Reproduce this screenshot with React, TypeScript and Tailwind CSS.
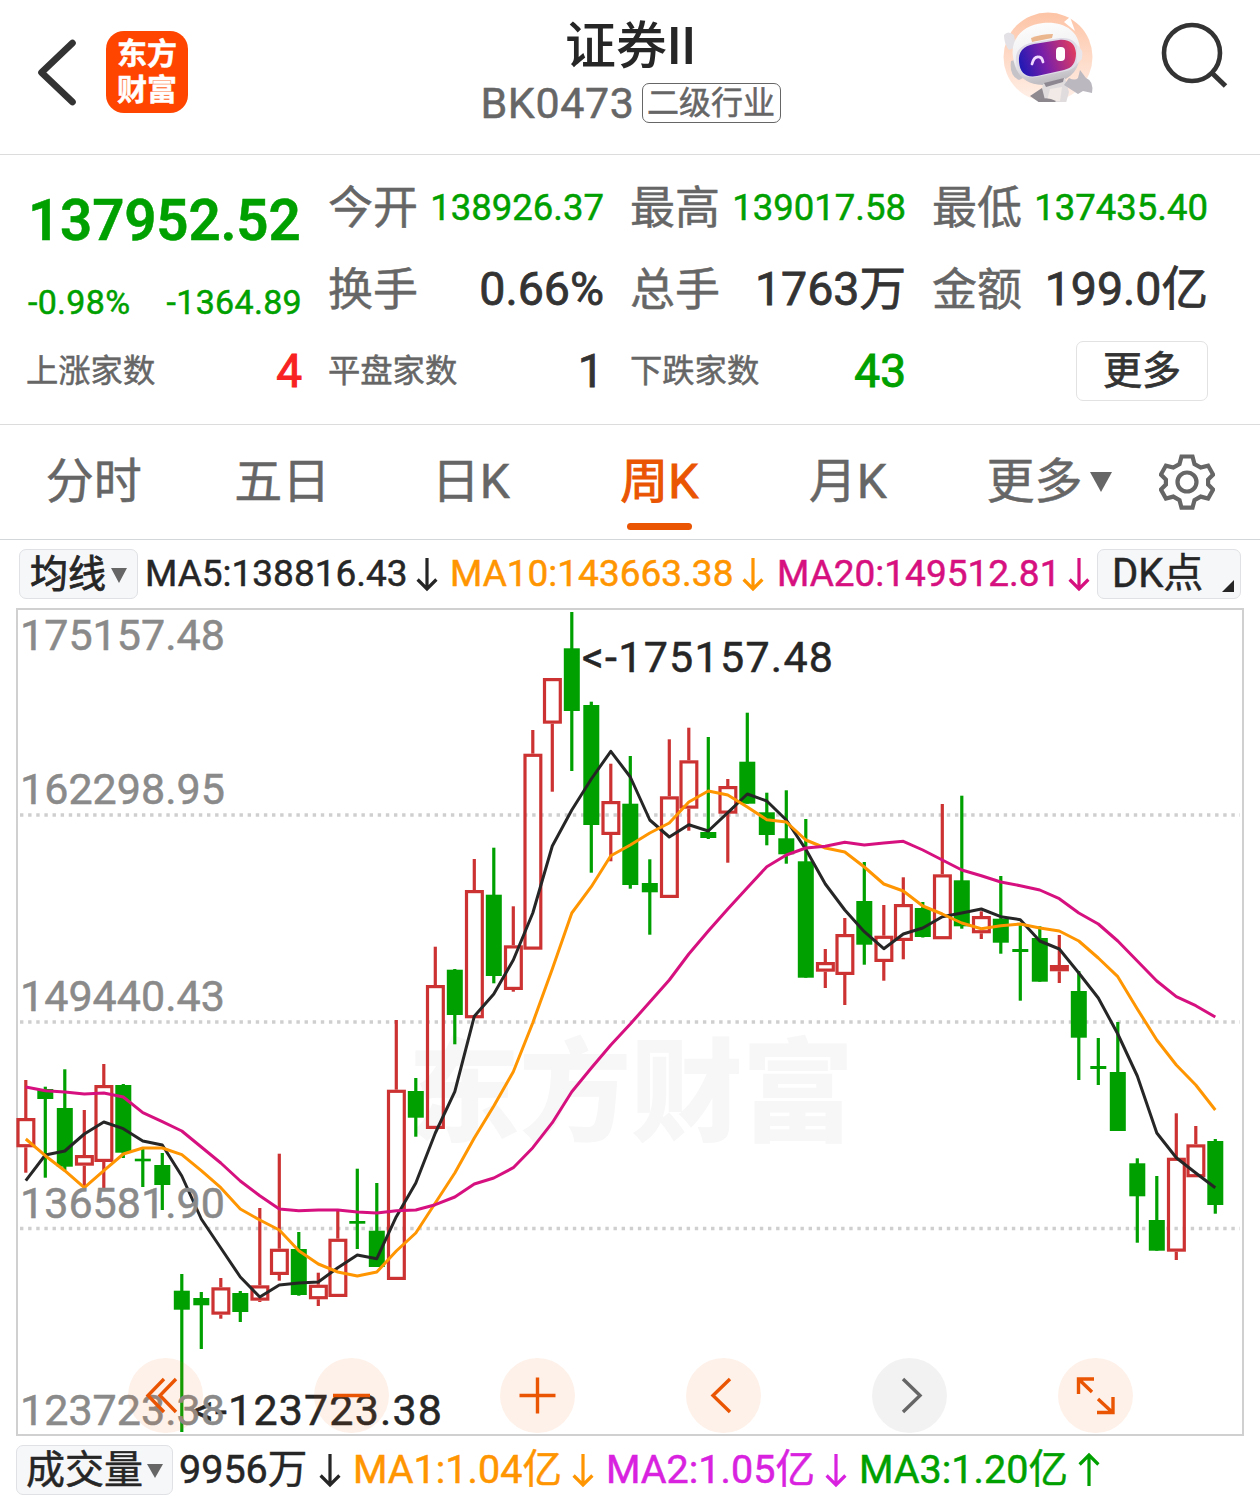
import type { ReactNode } from "react";
import clsx from "clsx";

type Candle = [color: "r" | "g", high: number, top: number, bottom: number, low: number];

const FIRST_X = 25.8;
const STEP = 19.5;

/** Weekly candles, oldest first: color, high, body top, body bottom, low */
const CANDLES: Candle[] = [
    ["r", 1080, 1118, 1147.3, 1172.7],
    ["g", 1086.7, 1089, 1099, 1177.7],
    ["g", 1069.3, 1108, 1166.7, 1170],
    ["r", 1110, 1155, 1165.7, 1188],
    ["r", 1064, 1085, 1162, 1188],
    ["g", 1084, 1085, 1152.7, 1158],
    ["g", 1147, 1158.7, 1161.3, 1187],
    ["g", 1153, 1165, 1185, 1210],
    ["g", 1274, 1290.7, 1309.7, 1432],
    ["g", 1292, 1298, 1305.3, 1349],
    ["r", 1278, 1287.3, 1314.7, 1318.7],
    ["g", 1291, 1293, 1312, 1322],
    ["r", 1208, 1285.3, 1300.7, 1302],
    ["r", 1153.7, 1248.7, 1275, 1280.7],
    ["g", 1232, 1249, 1295, 1295.7],
    ["r", 1272.7, 1284.7, 1299.3, 1306],
    ["r", 1211, 1238.7, 1297, 1297],
    ["g", 1168.7, 1221, 1223.7, 1249],
    ["g", 1183, 1230.7, 1267, 1267],
    ["r", 1020, 1089.7, 1280, 1280],
    ["g", 1078, 1091, 1117.7, 1136.7],
    ["r", 946.7, 985, 1129, 1129],
    ["g", 969, 969.7, 1015, 1044.3],
    ["r", 859, 890, 1018.3, 1018.3],
    ["g", 847.7, 894.7, 976, 983.3],
    ["r", 906.3, 945.3, 990, 991.7],
    ["r", 730, 753.7, 949.7, 949.7],
    ["r", 678, 678, 723.7, 791.7],
    ["g", 612, 648.3, 711, 771],
    ["g", 701.7, 705, 825, 872.7],
    ["r", 763.7, 801, 835, 861.3],
    ["g", 756, 803.7, 885, 888.7],
    ["g", 859.3, 883, 892.3, 934.7],
    ["r", 739.3, 796.3, 898, 898],
    ["r", 727.7, 760.3, 808.7, 830.7],
    ["g", 737, 832, 838, 839],
    ["r", 779, 786, 813.7, 862.7],
    ["g", 712.7, 761.7, 803.7, 803.7],
    ["g", 792.7, 812.3, 835, 845.3],
    ["g", 790.3, 838.3, 854.3, 863.7],
    ["g", 819, 861.3, 977.7, 977.7],
    ["r", 949, 962, 971.7, 988],
    ["r", 918, 934, 975, 1005],
    ["g", 862, 901, 944.7, 964.7],
    ["r", 905, 935.7, 962, 980.7],
    ["r", 877.3, 904, 941, 959.3],
    ["g", 902, 908, 937, 937.5],
    ["r", 804, 874.3, 939.3, 939.3],
    ["g", 795.7, 880.3, 926.3, 928.7],
    ["r", 911.3, 916, 933.3, 939],
    ["g", 876, 918.7, 942.7, 953.7],
    ["g", 925, 949, 952, 1000.7],
    ["g", 926.3, 938, 981.7, 981.7],
    ["r", 935, 965, 971.3, 983],
    ["g", 971, 991, 1037.7, 1080],
    ["g", 1038, 1066, 1069, 1085],
    ["g", 1022, 1072, 1131, 1131],
    ["g", 1158.3, 1163.3, 1196.3, 1242.7],
    ["g", 1176, 1220, 1250.7, 1250.7],
    ["r", 1113.3, 1157.7, 1251.7, 1260],
    ["r", 1126, 1144.3, 1177.3, 1177.3],
    ["g", 1139, 1141, 1205, 1213.7],
];

const MA5 = [
    1180.7, 1155, 1151, 1134, 1122, 1128.7, 1141, 1145, 1176, 1219, 1248, 1277, 1297, 1285, 1283, 1282,
    1267.7, 1255, 1258.7, 1216.7, 1183, 1133, 1091.7, 1016.3, 994, 960, 913, 846, 810, 779, 751.3, 777,
    820, 837, 824.7, 831, 812.7, 794, 801, 820, 849.3, 884, 910, 931.7, 948.7, 934, 928, 916.7,
    913, 909, 916.7, 919.7, 941, 949, 973, 998, 1034, 1076, 1133, 1157.7, 1173, 1187.7,
];

const MA10 = [
    1139, 1155.7, 1170.7, 1187.7, 1170.7, 1154, 1148, 1148, 1154.7, 1170.7, 1187.7, 1209, 1220, 1230, 1250.7, 1264,
    1272, 1276, 1272, 1251, 1233, 1203, 1173, 1138, 1106, 1071.7, 1022.7, 969, 913, 886.7, 855.7, 845,
    833, 823, 802, 791, 795, 807, 819.7, 822, 840, 848, 852, 867, 884, 891, 906, 914,
    923, 928.7, 925.7, 924, 928, 931, 941, 958, 976.7, 1009, 1040, 1065, 1085, 1110,
];

const MA20 = [
    1087, 1090.7, 1092, 1094, 1093, 1097, 1112.7, 1121.7, 1131, 1147, 1163, 1181, 1195.7, 1209, 1210.7, 1210,
    1210, 1212, 1213, 1210.7, 1210, 1204.7, 1197, 1184, 1178, 1167.7, 1147.7, 1122.7, 1091.7, 1068, 1045, 1024,
    1002, 980, 954, 931, 909, 887.7, 866.7, 855, 848, 846.3, 842.3, 845, 843, 841.3, 850, 860,
    870, 875.7, 882, 885.7, 890, 898.7, 913, 924, 941, 961, 981, 996.7, 1005.7, 1017,
];

const PRICE_LABELS = [
    { text: "175157.48", y: 650 },
    { text: "162298.95", y: 804 },
    { text: "149440.43", y: 1011 },
    { text: "136581.90", y: 1218 },
    { text: "123723.38", y: 1425 },
];

const toPoints = (values: number[]) => values.map((y, i) => `${FIRST_X + i * STEP},${y}`).join(" ");

function Arrow({ up, className }: { up?: boolean; className?: string }) {
    return (
        <svg viewBox="0 0 22 36" className={clsx("h-9 w-[22px] shrink-0", up && "rotate-180", className)} fill="none" stroke="currentColor" strokeWidth="3.2">
            <path d="M11 2v30M1.6 23.5 11 33l9.4-9.5" />
        </svg>
    );
}

function Triangle({ className }: { className?: string }) {
    return (
        <svg viewBox="0 0 22 20" className={className} fill="currentColor" preserveAspectRatio="none">
            <path d="M0 0h22L11 20z" />
        </svg>
    );
}

function RobotAvatar() {
    return (
        <svg viewBox="0 0 92 92" className="size-[92px]">
            <defs>
                <linearGradient id="sky" x1="0" y1="0" x2="0" y2="1">
                    <stop offset="0" stopColor="#fdc4a6" />
                    <stop offset="1" stopColor="#fff0e8" />
                </linearGradient>
                <linearGradient id="visor" x1="0" y1="0.6" x2="1" y2="0.4">
                    <stop offset="0" stopColor="#2119b4" />
                    <stop offset="0.45" stopColor="#7a1fa8" />
                    <stop offset="1" stopColor="#dd3b62" />
                </linearGradient>
                <linearGradient id="shell" x1="0" y1="0" x2="0.2" y2="1">
                    <stop offset="0" stopColor="#ffffff" />
                    <stop offset="0.6" stopColor="#f0eff1" />
                    <stop offset="1" stopColor="#c0bdc3" />
                </linearGradient>
                <clipPath id="round">
                    <path d="M0 0h92v91H0z" />
                </clipPath>
            </defs>
            <circle cx="46" cy="46" r="44.5" fill="url(#sky)" />
            <g clipPath="url(#round)">
                <path d="M2 24q4-5 10 0l2 12-7 3q-5-6-5-15z" fill="#e3e1e5" />
                <path d="M9 50q-2 15 8 19l6-3-6-18z" fill="#c5c2c8" />
                <path d="M62 11l6-5 5 14z" fill="#fff" />
                <path d="M11 46C8 28 21 14 41 12c21-2 36 8 37 26 1 19-7 29-24 34-23 6-40-2-43-26z" fill="url(#shell)" />
                <path d="M29 27q10-4 22-4l-1 4-20 4z" fill="#eab68e" />
                <path d="M14 50c-1-10 5-17 19-19l25-4c12-1 18 5 19 14 1 11-4 17-13 19l-29 6c-13 2-20-4-21-16z" fill="#dedbe6" />
                <path d="M17 51c-1-10 4-16 15-18l25-4c11-1 16 4 17 13 0 10-4 15-12 17l-27 6c-11 2-17-3-18-14z" fill="url(#visor)" />
                <path d="M30 53q2-8 7-7 3 0 4 5" fill="none" stroke="#f0d8ff" strokeWidth="2.8" strokeLinecap="round" />
                <rect x="54" y="36" width="9" height="14" rx="4" fill="#fff" />
                <path d="M75 34q7 4 5 14l-5 5z" fill="#e8e6ea" />
                <path d="M41 73l22-6 4 14-3 11H38z" fill="#e0dcde" />
                <path d="M42 72l20-5-1 4-17 5z" fill="#8c8790" />
                <path d="M28 85l12-8 3 12-5 3z" fill="#8f8a90" />
                <path d="M48 78l12-2-2 14H45z" fill="#f1eae6" />
                <path d="M67 67q6 3 9 0l2-8 6 8q8 3 6 15l-9-2-5 3-14-9z" fill="#bbb8c0" />
                <path d="M36 89q9-4 18 1l-3 3H38z" fill="#8c878c" />
            </g>
        </svg>
    );
}

function Header() {
    return (
        <header className="flex h-[155px] items-start justify-between border-b border-[#dcdcdc] pr-[32px] pl-[37px]">
            <div className="flex w-[336px] items-start">
                <svg viewBox="0 0 40 68" className="mt-[38px] h-[68px] w-10" fill="none" stroke="#333" strokeWidth="6.6" strokeLinecap="round" strokeLinejoin="round">
                    <path d="M35.5 5 4.5 34.5l31 29.5" />
                </svg>
                <div className="mt-[31px] ml-[29px] flex size-[82px] flex-col items-center justify-center rounded-[18px] bg-[#ff4500] text-[30px] leading-[36px] font-bold text-white">
                    <span>东方</span>
                    <span>财富</span>
                </div>
            </div>
            <div className="flex flex-col items-center">
                <h1 className="mt-[18px] h-[59px] text-[51px] leading-[58px] font-medium text-[#262626] [-webkit-text-stroke:0px]">证券II</h1>
                <div className="mt-[6px] flex items-center text-[#666]">
                    <span className="text-[43px] leading-[38px] tracking-[0.6px]">BK0473</span>
                    <span className="ml-[7px] flex h-[40px] w-[139px] items-center justify-center rounded-[7px] border border-[#666] text-[32px] leading-[36px]">
                        二级行业
                    </span>
                </div>
            </div>
            <div className="flex w-[340px] items-start justify-end">
                <div className="mt-[11px]">
                    <RobotAvatar />
                </div>
                <svg viewBox="0 0 68 68" className="mt-[22px] ml-[66px] h-[68px] w-[68px]" fill="none" stroke="#333" strokeWidth="4.6">
                    <circle cx="32" cy="31" r="28" />
                    <path d="M52 51 65.5 64" strokeWidth="5" />
                </svg>
            </div>
        </header>
    );
}

function Stat({ label, small, children }: { label: string; small?: boolean; children: ReactNode }) {
    return (
        <div className="flex h-[82px] items-center justify-between whitespace-nowrap">
            <span className={clsx("-ml-[2px] text-[#666]", small ? "text-[32.3px]" : "pt-[3px] text-[45px]")}>{label}</span>
            {children}
        </div>
    );
}

function Quote() {
    const price = "pt-[3px] text-[36.5px] text-[#00a000]";
    const value = "pt-[2px] text-[46.5px] text-[#333] [-webkit-text-stroke:0.8px]";

    return (
        <section className="grid h-[270px] grid-cols-4 gap-x-7 border-b border-[#dcdcdc] pt-[11px] pr-[52px] pl-7">
            <div>
                <div className="flex h-[106px] items-center pt-1">
                    <span className="text-[56.5px] font-semibold tracking-[-0.2px] whitespace-nowrap text-[#00a000]">137952.52</span>
                </div>
                <div className="flex h-[58px] items-center justify-between pt-[2px] text-[34px] tracking-[0.3px] text-[#00a000]">
                    <span>-0.98%</span>
                    <span>-1364.89</span>
                </div>
                <Stat label="上涨家数" small>
                    <span className="text-[46px] text-[#f82222] [-webkit-text-stroke:1px]">4</span>
                </Stat>
            </div>
            <div>
                <Stat label="今开"><span className={price}>138926.37</span></Stat>
                <Stat label="换手"><span className={value}>0.66%</span></Stat>
                <Stat label="平盘家数" small><span className={value}>1</span></Stat>
            </div>
            <div>
                <Stat label="最高"><span className={price}>139017.58</span></Stat>
                <Stat label="总手"><span className={value}>1763万</span></Stat>
                <Stat label="下跌家数" small>
                    <span className="text-[46px] text-[#00a000] [-webkit-text-stroke:1px]">43</span>
                </Stat>
            </div>
            <div>
                <Stat label="最低"><span className={price}>137435.40</span></Stat>
                <Stat label="金额"><span className={value}>199.0亿</span></Stat>
                <div className="flex h-[82px] items-center justify-end">
                    <button className="h-[60px] w-[132px] rounded-[7px] border border-[#e2e2e2] text-[39px] leading-[54px] text-[#333] [-webkit-text-stroke:0.8px]">更多</button>
                </div>
            </div>
        </section>
    );
}

function Tabs() {
    const tabs = ["分时", "五日", "日K", "周K", "月K"];

    return (
        <nav className="flex h-[115px] items-start border-b border-[#d4d7da] text-[48px] text-[#666]">
            {tabs.map((tab) => (
                <div key={tab} className="flex w-[188.5px] flex-col items-center">
                    <span className={clsx("mt-[26px] -ml-[1px] leading-[62px]", tab === "周K" && "text-[#ea5504] [-webkit-text-stroke:1px]")}>{tab}</span>
                    {tab === "周K" && <span className="mt-[10px] h-[7px] w-[65px] rounded-full bg-[#ea5504]" />}
                </div>
            ))}
            <div className="mt-[26px] ml-[44px] flex items-center leading-[62px]">
                更多
                <Triangle className="ml-[7px] h-[20px] w-[22px]" />
            </div>
            <svg viewBox="0 0 56 56" className="mt-[29px] ml-[47px] size-[56px]" fill="none" stroke="#666" strokeWidth="4.2">
                <path d="M22.5 2.5h11l2 7.5 6.2 3.6 7.4-2 5 9-5 5v5l5 5-5 9-7.4-2-6.2 3.6-2 7.5h-11l-2-7.5-6.2-3.6-7.4 2-5-9 5-5v-5l-5-5 5-9 7.4 2 6.2-3.6z" />
                <circle cx="28" cy="28" r="9.5" />
            </svg>
        </nav>
    );
}

function Legend({ color, width, up, children }: { color: string; width: string; up?: boolean; children: ReactNode }) {
    return (
        <div className={clsx("flex shrink-0 items-center justify-between whitespace-nowrap", color, width)}>
            <span>{children}</span>
            <Arrow up={up} />
        </div>
    );
}

function AverageBar() {
    return (
        <div className="flex h-[68px] items-center pl-[19px] text-[37px]">
            <button className="flex h-[50px] w-[119px] items-center rounded-[7px] border border-[#dfe1e4] bg-[#f6f7f9] pl-[10px] text-[38px] leading-[46px] text-[#262626] [-webkit-text-stroke:0.8px]">
                均线
                <Triangle className="mt-[3px] ml-[5px] h-[15px] w-[16px] shrink-0 text-[#666]" />
            </button>
            <Legend color="text-[#262626] ml-[7px]" width="w-[293px]">MA5:138816.43</Legend>
            <Legend color="text-[#ff9500] ml-[12px]" width="w-[314px]">MA10:143663.38</Legend>
            <Legend color="text-[#d6117f] ml-[13px]" width="w-[313px]">MA20:149512.81</Legend>
            <button className="relative ml-[7px] h-[50px] w-[144px] rounded-[7px] border border-[#dfe1e4] bg-[#f6f7f9] pl-[14px] text-left text-[40px] leading-[46px] text-[#262626]">
                DK点
                <svg viewBox="0 0 12 12" className="absolute right-[6px] bottom-[6px] size-3" fill="#262626">
                    <path d="M12 0v12H0z" />
                </svg>
            </button>
        </div>
    );
}

function CandleShape({ candle, x }: { candle: Candle; x: number }) {
    const [color, high, top, bottom, low] = candle;

    if (color === "g") {
        return (
            <g fill="#00a000">
                <rect x={x - 1.6} y={high} width="3.2" height={low - high} />
                <rect x={x - 8} y={top} width="16" height={bottom - top} />
            </g>
        );
    }
    return (
        <g>
            <rect x={x - 1.6} y={high} width="3.2" height={top - high} fill="#cc3232" />
            <rect x={x - 1.6} y={bottom} width="3.2" height={low - bottom} fill="#cc3232" />
            <rect x={x - 7.8} y={top + 1.6} width="15.8" height={bottom - top - 3.2} fill="none" stroke="#cc3232" strokeWidth="3.2" />
        </g>
    );
}

function RoundButton({ gray, children }: { gray?: boolean; children: ReactNode }) {
    return (
        <button className={clsx("size-[75px] rounded-full", gray ? "bg-black/5 text-[#666]" : "bg-[#f4600c]/9 text-[#ea5504]")}>
            <svg viewBox="0 0 75 75" className="size-full" fill="none" stroke="currentColor" strokeWidth="3.4">
                {children}
            </svg>
        </button>
    );
}

function Chart() {
    return (
        <div className="relative mx-4 h-[828px]">
            <svg viewBox="16 608 1228 828" className="block h-full w-full">
                <text x="408" y="1133" textLength="446" fontSize="112" fontWeight="900" fill="#f7f7f7">东方财富</text>
                {[815, 1022, 1228.5].map((y) => (
                    <line key={y} x1="20" x2="1240" y1={y} y2={y} stroke="#cfcfcf" strokeWidth="3.4" strokeDasharray="3.4 4.73" />
                ))}
                <rect x="17" y="609" width="1226" height="826" fill="none" stroke="#d0d0d0" strokeWidth="2" />
                {CANDLES.map((candle, i) => (
                    <CandleShape key={i} candle={candle} x={FIRST_X + i * STEP} />
                ))}
                <g fill="none" strokeWidth="3" strokeLinejoin="round">
                    <polyline points={toPoints(MA5)} stroke="#262626" />
                    <polyline points={toPoints(MA10)} stroke="#ff9500" />
                    <polyline points={toPoints(MA20)} stroke="#d6117f" />
                </g>
                <g fontSize="43" fill="#262626" stroke="#262626" strokeWidth="0.5">
                    <text x="582" y="672" textLength="251">&lt;-175157.48</text>
                    <text x="192" y="1425" textLength="250">&lt;-123723.38</text>
                </g>
                <g fontSize="43" fill="#8a8a8a" stroke="#8a8a8a" strokeWidth="0.5">
                    {PRICE_LABELS.map((label) => (
                        <text key={label.text} x="20" y={label.y} textLength="205">{label.text}</text>
                    ))}
                </g>
            </svg>
            <div className="absolute bottom-[3px] left-[112px] flex gap-[111px]">
                <RoundButton><path d="M36 21 20 37.5l16 16.5M48 21 32 37.5l16 16.5" /></RoundButton>
                <RoundButton><path d="M19 37.5h37" /></RoundButton>
                <RoundButton><path d="M19.5 37.5h36M37.5 19.5v36" /></RoundButton>
                <RoundButton><path d="M44 21 27 37.5l17 16.5" /></RoundButton>
                <RoundButton gray><path d="M31 21l17 16.5L31 54" /></RoundButton>
                <RoundButton><path d="M20.5 36V21H36M21 21.5l13 12.5M40 41l14 13M55 39v15.5H39" /></RoundButton>
            </div>
        </div>
    );
}

function VolumeBar() {
    return (
        <div className="flex h-[67px] items-center pl-4 text-[39.5px]">
            <button className="flex h-[50px] w-[157px] items-center rounded-[7px] border border-[#dfe1e4] bg-[#f6f7f9] pl-[9px] text-[39px] leading-[46px] text-[#262626]">
                成交量
                <Triangle className="mt-[3px] ml-[4px] h-[14px] w-[16px] shrink-0 text-[#666]" />
            </button>
            <Legend color="text-[#262626] ml-[6px]" width="w-[162px]">9956万</Legend>
            <Legend color="text-[#ff9500] ml-[12px]" width="w-[241px]">MA1:1.04亿</Legend>
            <Legend color="text-[#d822e0] ml-[12px]" width="w-[241px]">MA2:1.05亿</Legend>
            <Legend color="text-[#00a000] ml-[12px]" width="w-[241px]" up>MA3:1.20亿</Legend>
        </div>
    );
}

export default function App() {
    return (
        <div className="h-[1503px] w-[1260px] overflow-hidden bg-white font-['Roboto','Noto_Sans_CJK_SC',sans-serif] [-webkit-text-stroke:0.5px]">
            <Header />
            <Quote />
            <Tabs />
            <AverageBar />
            <Chart />
            <VolumeBar />
        </div>
    );
}
